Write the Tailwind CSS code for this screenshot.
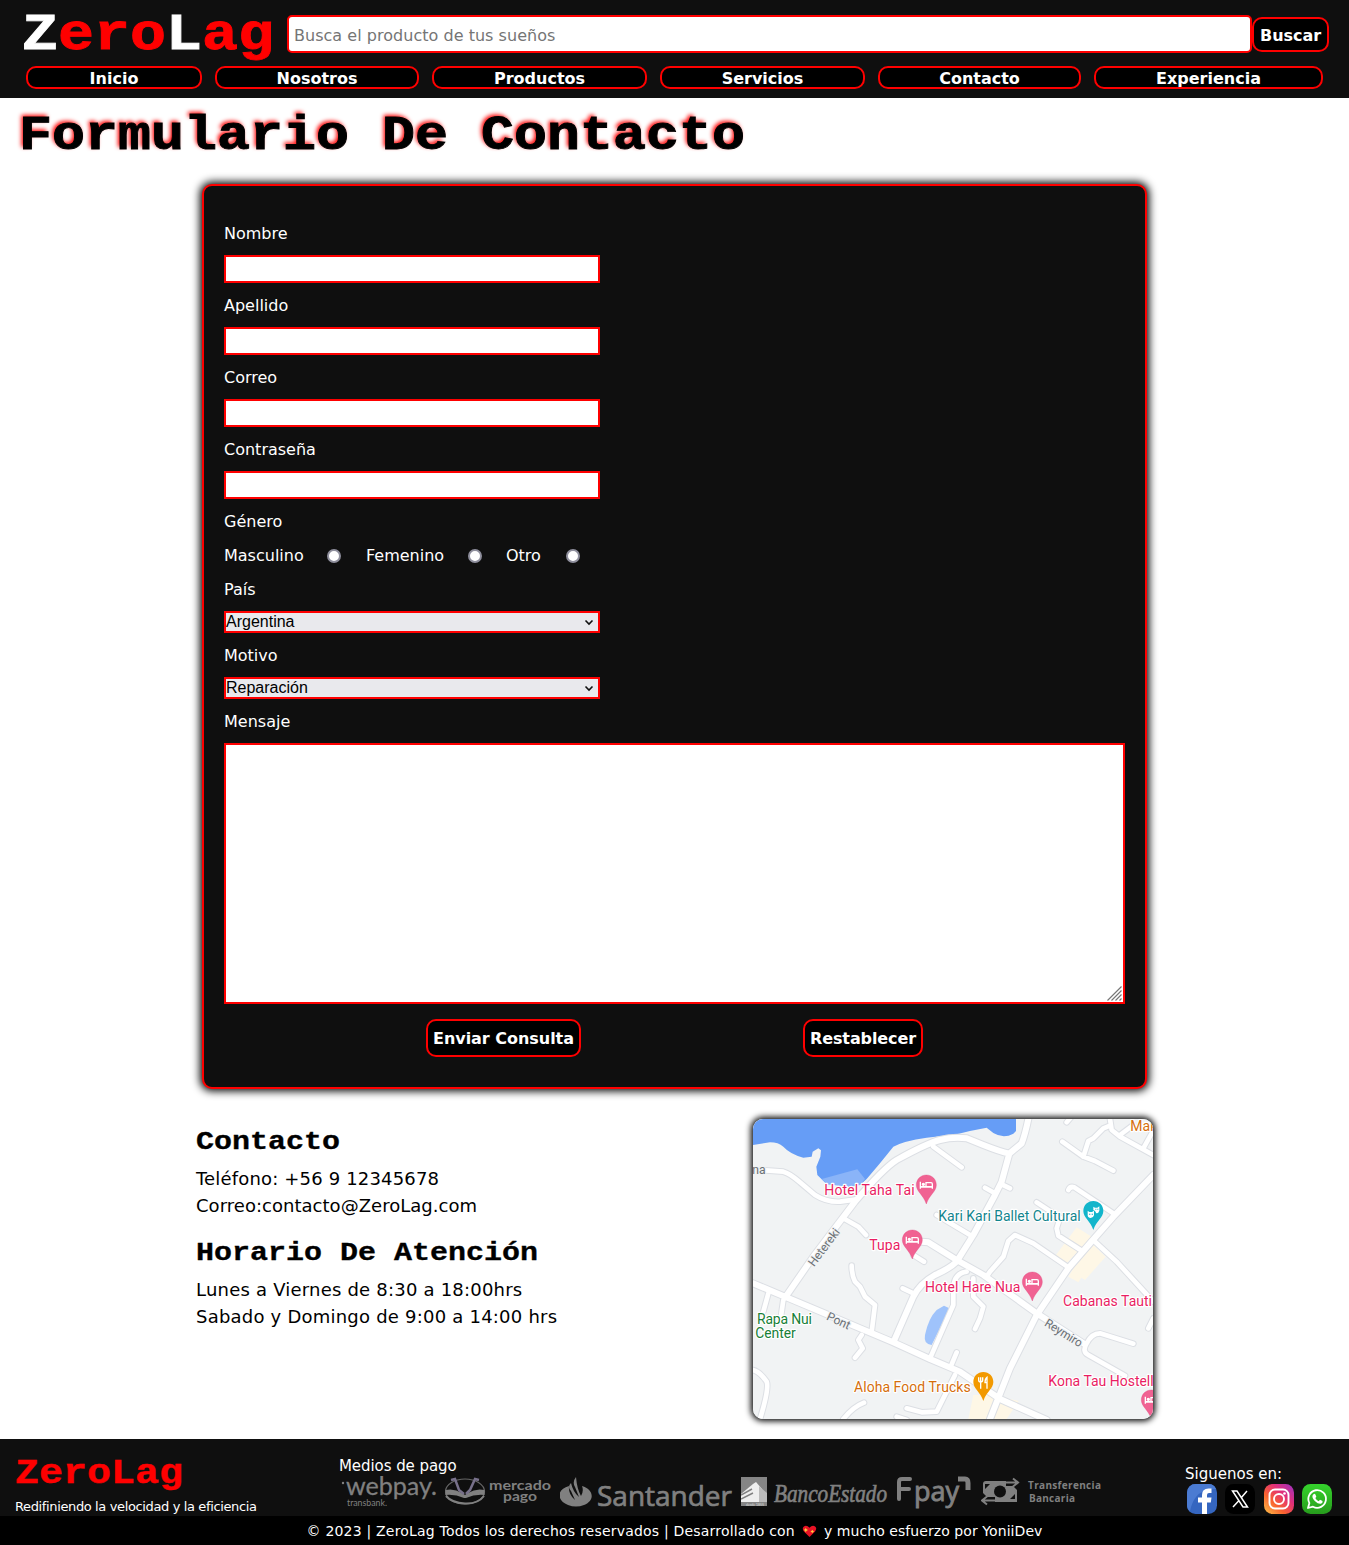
<!DOCTYPE html>
<html lang="es">
<head>
<meta charset="utf-8">
<title>ZeroLag - Contacto</title>
<script src="https://cdn.jsdelivr.net/npm/@tailwindcss/browser@4"></script>
</head>
<body class="bg-white text-black font-['Verdana','DejaVu_Sans',sans-serif] text-[16px] w-[1349px] h-[1545px] overflow-hidden flex flex-col">

<header class="bg-[#0f0f0f] h-[98px] shrink-0">
  <div class="flex h-[66px] pl-[22px] pr-5">
    <a class="w-[265px] shrink-0 font-['Courier_New','Liberation_Mono',monospace] font-bold text-[60px] leading-[66px] text-[#f00] origin-[0_49px] scale-y-[.87] [-webkit-text-stroke:1px]"><span class="text-white">Z</span>ero<span class="text-white">L</span>ag</a>
    <input type="text" placeholder="Busca el producto de tus sueños" class="mt-[15px] w-[965px] h-[38px] bg-white border-2 border-[#f00] rounded-[5px] px-[5px] pt-[2px] placeholder:text-[#757575] tracking-[0.03px]">
    <button class="mt-[17px] w-[77px] h-[35px] pt-[2px] bg-black border-2 border-[#f00] rounded-[10px] text-white font-bold tracking-[-0.05px]">Buscar</button>
  </div>
  <nav class="flex gap-[13px] pl-[26px] text-white font-bold leading-[21px] text-center">
    <a class="w-[176px] h-[23px] bg-black border-2 border-[#f00] rounded-[10px]">Inicio</a>
    <a class="w-[204px] h-[23px] bg-black border-2 border-[#f00] rounded-[10px]">Nosotros</a>
    <a class="w-[215px] h-[23px] bg-black border-2 border-[#f00] rounded-[10px]">Productos</a>
    <a class="w-[205px] h-[23px] bg-black border-2 border-[#f00] rounded-[10px]">Servicios</a>
    <a class="w-[203px] h-[23px] bg-black border-2 border-[#f00] rounded-[10px]">Contacto</a>
    <a class="w-[229px] h-[23px] bg-black border-2 border-[#f00] rounded-[10px]">Experiencia</a>
  </nav>
</header>

<main class="h-[1341px] shrink-0">
  <h1 class="h-[86px] pl-[19px] pt-[6px] font-['Courier_New','Liberation_Mono',monospace] font-bold text-[55px] leading-[62px] origin-[0_52px] scale-y-[.87] [-webkit-text-stroke:1px] [text-shadow:-2px_-2px_5px_#f00]">Formulario De Contacto</h1>

  <form class="ml-[202px] w-[945px] h-[905px] bg-[#0f0f0f] border-2 border-[#f00] rounded-[10px] shadow-[0_0_8px_2px_#000] px-5 pt-[25px] text-white flex flex-col">
    <label class="h-[44px] leading-[46px]">Nombre</label>
    <input class="w-[376px] h-[28px] bg-white border-2 border-[#f00]">
    <label class="h-[44px] leading-[46px]">Apellido</label>
    <input class="w-[376px] h-[28px] bg-white border-2 border-[#f00]">
    <label class="h-[44px] leading-[46px]">Correo</label>
    <input class="w-[376px] h-[28px] bg-white border-2 border-[#f00]">
    <label class="h-[44px] leading-[46px]">Contraseña</label>
    <input class="w-[376px] h-[28px] bg-white border-2 border-[#f00]">
    <label class="h-[44px] leading-[46px]">Género</label>
    <div class="h-[24px] leading-[26px] flex">
      <span class="w-[103px]">Masculino</span><i class="mt-[6px] w-[14px] h-[14px] rounded-full bg-white border-2 border-[#8f8f9d]"></i>
      <span class="ml-[25px] w-[102px]">Femenino</span><i class="mt-[6px] w-[14px] h-[14px] rounded-full bg-white border-2 border-[#8f8f9d]"></i>
      <span class="ml-[24px] w-[60px]">Otro</span><i class="mt-[6px] w-[14px] h-[14px] rounded-full bg-white border-2 border-[#8f8f9d]"></i>
    </div>
    <label class="h-[44px] leading-[46px]">País</label>
    <div class="w-[376px] h-[22px] bg-[#e9e9ed] border-2 border-[#f00] text-black font-['Arial','Liberation_Sans',sans-serif] leading-[17px] flex justify-between items-start"><span>Argentina</span><svg class="mt-[6px] mr-[4px]" width="10" height="7" viewBox="0 0 10 7"><path d="M1.5 1.5L5 5l3.5-3.500" fill="none" stroke="#111" stroke-width="1.6"/></svg></div>
    <label class="h-[44px] leading-[46px]">Motivo</label>
    <div class="w-[376px] h-[22px] bg-[#e9e9ed] border-2 border-[#f00] text-black font-['Arial','Liberation_Sans',sans-serif] leading-[17px] flex justify-between items-start"><span>Reparación</span><svg class="mt-[6px] mr-[4px]" width="10" height="7" viewBox="0 0 10 7"><path d="M1.5 1.5L5 5l3.5-3.500" fill="none" stroke="#111" stroke-width="1.6"/></svg></div>
    <label class="h-[44px] leading-[46px]">Mensaje</label>
    <div class="w-[901px] h-[261px] bg-white border-2 border-[#f00] flex justify-end items-end"><svg class="mb-px mr-px" width="15" height="15" viewBox="0 0 15 15"><path d="M.5 14.500L14.500.5M4.500 14.500l10-10M8.500 14.500l6-6M12.500 14.500l2-2" stroke="#777" stroke-width="1.200"/></svg></div>
    <div class="mt-[15px] pl-[202px] flex gap-[222px]">
      <button type="button" class="w-[155px] h-[38px] pt-[2px] bg-black border-2 border-[#f00] rounded-[10px] font-bold tracking-[-0.03px] whitespace-nowrap">Enviar Consulta</button>
      <button type="button" class="w-[120px] h-[38px] pt-[2px] bg-black border-2 border-[#f00] rounded-[10px] font-bold tracking-[-0.1px]">Restablecer</button>
    </div>
  </form>

  <section class="flex pl-[196px] pt-[30px]">
    <div class="w-[557px] text-[18px] leading-[27px]">
      <h2 class="pt-[5px] h-[46px] font-['Courier_New','Liberation_Mono',monospace] font-bold text-[30px] leading-[34px] origin-[0_30px] scale-y-[.87] [-webkit-text-stroke:.4px]">Contacto</h2>
      <p class="tracking-[0.17px]">Teléfono: +56 9 12345678</p>
      <p class="tracking-[0.03px]">Correo:contacto@ZeroLag.com</p>
      <h2 class="mt-[15px] h-[42px] pt-px font-['Courier_New','Liberation_Mono',monospace] font-bold text-[30px] leading-[34px] origin-[0_26px] scale-y-[.87] [-webkit-text-stroke:.4px]">Horario De Atención</h2>
      <p class="tracking-[0.21px]">Lunes a Viernes de 8:30 a 18:00hrs</p>
      <p class="tracking-[0.22px]">Sabado y Domingo de 9:00 a 14:00 hrs</p>
    </div>
    <div class="w-[400px] h-[300px] rounded-[10px] overflow-hidden shadow-[0_0_6px_2px_#000] bg-[#f1f3f4]">
      <svg width="400" height="300" viewBox="39 42 1200 900" font-family="Roboto, sans-serif" font-size="42">
        <defs>
          <path id="roads" d="M39 535L135 575L460 712L570 762L660 800L780 882L920 945M135 578L220 455L345 290Q430 190 470 165Q560 115 600 105Q640 95 680 100L730 120Q780 140 808 146M1240 210L1120 335L1050 415L985 490L890 630L810 790L750 942M545 410L565 412L650 465L730 510L890 625L1030 715M808 146L785 230L765 270L700 390L650 470Q630 490 585 510Q540 535 520 575L460 712M808 146L845 115Q855 90 865 42"/>
          <path id="lanes" d="M60 195L130 200Q150 205 180 232L225 270Q260 292 300 290L345 284M310 340L355 365L378 390M520 450L552 470M590 330L690 390M335 482Q335 510 345 530L360 545L375 575L405 600L395 680M365 690L355 705L368 730L345 758M488 550L520 565M85 565L70 620M130 585L122 640M39 795Q60 800 80 830Q88 850 60 942M310 942Q340 905 372 893M500 910L545 922L590 920L645 810M650 742L632 785M470 935L500 945M570 760L640 600L640 560Q638 505 680 500M700 520L700 575L730 605L720 640L705 672M665 187L580 125M735 248L765 265M785 238L810 250M967 110L1030 155L1065 168L1120 197M1030 155L1045 108L1060 100L1090 70L1110 62M1110 42L1115 75L1140 95L1240 150M1140 90L1180 60M1210 130L1235 85M980 52L992 38M985 255Q990 243 1003 247L1120 325M1065 410L1130 470L1240 590M890 292L960 338L950 370L955 392L1025 437M740 515L750 500L790 455L805 408L825 390L880 415L985 487M1180 716L1080 685Q1055 685 1040 715Q1025 740 1045 750L1155 812M1240 640L1225 670"/>
        </defs>
        <rect x="39" y="42" width="1200" height="900" fill="#f1f3f4"/>
        <path fill="#669df6" d="M39 42V120L90 112Q115 112 130 125Q150 147 190 158L215 155L218 140L235 130L243 136L241 155L229 185L232 210L260 238L360 240L380 222L420 175L460 125Q490 108 560 98L650 88L690 78L740 68L760 84Q790 102 820 86L828 78V42Z"/>
        <path fill="#8ab4f8" d="M245 222L352 193L375 222L360 240L330 246L262 238Z"/>
        <path fill="#9fc3fb" d="M612 602L628 610L600 670L575 720Q550 718 555 690Q565 640 590 615Z"/>
        <path fill="#fef7e6" d="M1010 367L1055 395L975 480L948 450ZM1050 410L1097 455L1035 525L1024 518L1015 532L985 515ZM700 870L765 870L740 942L685 942ZM780 876L836 888L800 942L755 942Z"/>
        <g fill="none" stroke-linejoin="round" stroke-linecap="round">
          <use href="#lanes" stroke="#dcdfe4" stroke-width="20"/>
          <use href="#roads" stroke="#dcdfe4" stroke-width="24"/>
          <use href="#lanes" stroke="#fff" stroke-width="14"/>
          <use href="#roads" stroke="#fff" stroke-width="18"/>
        </g>
        <g stroke="#fff" stroke-width="7" stroke-linejoin="round" paint-order="stroke">
          <g fill="#6b7075" stroke="#f1f3f4" font-size="36">
            <text x="37" y="206" textLength="40" lengthAdjust="spacingAndGlyphs">na</text>
            <text transform="translate(222 487) rotate(-53)" textLength="132" lengthAdjust="spacingAndGlyphs">Hetereki</text>
            <text transform="translate(257 643) rotate(25)" textLength="74" lengthAdjust="spacingAndGlyphs">Pont</text>
            <text transform="translate(911 661) rotate(32)" textLength="126" lengthAdjust="spacingAndGlyphs">Reymiro</text>
          </g>
          <g fill="#e91e63">
            <text x="253" y="270" textLength="271">Hotel Taha Tai</text>
            <text x="388" y="435" textLength="93">Tupa</text>
            <text x="555" y="561" textLength="286">Hotel Hare Nua</text>
            <text x="969" y="603" textLength="267">Cabanas Tauti</text>
            <text x="925" y="843" textLength="316">Kona Tau Hostell</text>
          </g>
          <text x="595" y="348" textLength="427" fill="#12858e">Kari Kari Ballet Cultural</text>
          <g fill="#188038">
            <text x="51" y="657" textLength="165">Rapa Nui</text>
            <text x="46" y="699" textLength="121">Center</text>
          </g>
          <g fill="#d56e0c">
            <text x="342" y="861" textLength="350">Aloha Food Trucks</text>
            <text x="1171" y="78">Mak</text>
          </g>
        </g>
        <defs>
          <path id="pin" d="M0-30C17-30 30-17 30 0C30 20 9 29 0 57C-9 29-30 20-30 0C-30-17-17-30 0-30Z"/>
          <g id="bed" fill="none" stroke="#fff" stroke-width="4"><path d="M-18-10V11M-18 6H18V11M18 6V-3Q18-7 14-7H-1V5M-18 5H18"/><circle cx="-9" cy="-2" r="3" fill="#fff"/></g>
        </defs>
        <g fill="#f06292" stroke="#e0407a" stroke-width="1">
          <use href="#pin" x="559" y="240"/><use href="#pin" x="517" y="405"/><use href="#pin" x="877" y="531"/><use href="#pin" x="1234" y="885"/>
        </g>
        <use href="#bed" x="559" y="240"/><use href="#bed" x="517" y="405"/><use href="#bed" x="877" y="531"/><use href="#bed" x="1234" y="885"/>
        <use href="#pin" x="1060" y="318" fill="#12b5cb"/>
        <path fill="#fff" d="M1043 317l5 4h8l6-4v14q-2 8-10 8t-9-8ZM1060 305l5 3h7l6-4v13q-2 8-9 8l-4-7-5-3Z"/>
        <path fill="#12b5cb" d="M1047 326h4v3h-4zM1055 326h4v3h-4zM1066 311h3v3h-3zM1072 311h3v3h-3z"/>
        <use href="#pin" x="730" y="831" fill="#f29900"/>
        <path fill="none" stroke="#fff" stroke-width="4" d="M716 817v8q0 6 6 6t6-6v-8M722 817v34M741 851v-34q-6 4-6 16h6"/>
      </svg>
    </div>
  </section>
</main>

<footer class="shrink-0 h-[106px] bg-[#0f0f0f] text-white">
  <div class="h-[77px] flex">
    <div class="w-[324px] pl-[15px] pt-[12px] shrink-0">
      <p class="font-['Courier_New','Liberation_Mono',monospace] font-bold text-[40px] leading-[44px] text-[#f00] origin-[0_33px] scale-y-[.87] [-webkit-text-stroke:.5px]">ZeroLag</p>
      <p class="mt-[3px] text-[13px] leading-[18px] tracking-[-0.37px] whitespace-nowrap">Redifiniendo la velocidad y la eficiencia</p>
    </div>
    <div class="pl-[15px] pt-[17px] w-[861px] shrink-0">
      <p class="text-[15px] leading-[20px] tracking-[-0.07px]">Medios de pago</p>
      <div class="flex gap-[7px] pl-[2px]">
        <svg width="97" height="35" viewBox="341 1476 97 35" fill="#808080" font-family="Lato, sans-serif"><circle cx="343" cy="1483" r="1.200"/><text x="346" y="1495" font-size="25" stroke="#808080" stroke-width=".3" textLength="91" lengthAdjust="spacingAndGlyphs">webpay.</text><text x="347" y="1505.500" font-size="8.500" textLength="40" lengthAdjust="spacingAndGlyphs">transbank.</text></svg>
        <svg width="108" height="35" viewBox="445 1476 108 35" fill="#808080" font-family="Lato, sans-serif" font-weight="700"><ellipse cx="465" cy="1491.500" rx="19.500" ry="12.500" fill="none" stroke="#666" stroke-width="1.200"/><path d="M445.500 1490Q454 1488 462 1493L465 1495L468 1493Q476 1488 484.500 1490V1495Q475 1494 466 1498H464Q455 1494 445.500 1495Z"/><path d="M451 1480L455 1479L459 1490L464 1494M479 1480L475 1479L470 1490L466 1494" fill="none" stroke="#77708a" stroke-width="2.500"/><path d="M446 1496Q452 1503 465 1503.500T484 1496" fill="none" stroke="#808080" stroke-width="2"/><text x="489" y="1490" font-size="14" textLength="62" lengthAdjust="spacingAndGlyphs">mercado</text><text x="503" y="1501" font-size="14" textLength="34" lengthAdjust="spacingAndGlyphs">pago</text></svg>
        <svg width="174" height="35" viewBox="560 1476 174 35" fill="#808080" font-family="'Open Sans', sans-serif"><path d="M569 1486C557 1489 556 1500 568 1505Q576 1508 584 1505C596 1500 593 1489 582 1486Q584 1491 581 1496Q577 1489 576 1477Q572 1482 575 1487L579 1497Q573 1492 571 1483Q567 1487 571 1491L575 1500Q568 1494 569 1486Z"/><text x="597" y="1505.500" font-size="27.500" stroke="#808080" stroke-width=".7" textLength="135" lengthAdjust="spacingAndGlyphs">Santander</text></svg>
        <svg width="148" height="35" viewBox="741 1476 148 35"><rect x="741" y="1477" width="26" height="29" fill="#858585"/><path d="M753 1484L756 1482L762 1489V1502H741V1494Z" fill="#eee"/><path d="M741 1495L752 1489M741 1499L753 1493" stroke="#808080" stroke-width="1.500"/><path d="M759 1486L767 1493V1502H759Z" fill="#bbb"/><text x="746" y="1505.500" font-family="Lato, sans-serif" font-size="3.500" fill="#ddd">desde 1855</text><text x="774" y="1501.500" font-family="'Liberation Serif', serif" font-style="italic" font-size="26" fill="#808080" stroke="#808080" stroke-width=".7" textLength="113" lengthAdjust="spacingAndGlyphs">BancoEstado</text></svg>
        <svg width="76" height="35" viewBox="895 1476 76 35" fill="none" stroke="#808080" stroke-width="4" stroke-linecap="round"><text x="913" y="1500.500" font-family="'Open Sans', sans-serif" font-size="27" fill="#808080" stroke-width=".9" textLength="45" lengthAdjust="spacingAndGlyphs">pay</text><path d="M898 1499V1482Q898 1479 901 1479H909M898 1489H908"/><path d="M957 1479H964Q967 1479 967 1483V1490" stroke-width="5" stroke-linecap="butt"/></svg>
        <svg class="ml-[2px]" width="121" height="35" viewBox="980 1476 121 35" fill="#808080" font-family="'Open Sans', sans-serif" font-weight="700" font-size="10"><path d="M985 1481H1005V1486H1012L1016 1490V1502H994V1497H986L982 1493V1484Q982 1481 985 1481Z"/><circle cx="999" cy="1491.500" r="6" fill="#0f0f0f"/><path d="M984 1484h5l-5 5ZM1014 1499h-5l5-5Z" fill="#0f0f0f"/><path d="M1001 1482.500H1016M1012 1478.500l5 4-5 4M996 1500.500H981.500M986 1496.500l-5 4 5 4" fill="none" stroke="#808080" stroke-width="2"/><text x="1027" y="1489" textLength="73">Transferencia</text><text x="1028" y="1502" textLength="46">Bancaria</text></svg>
      </div>
    </div>
    <div class="pt-[25px] -ml-px pl-px">
      <p class="text-[15px] leading-[20px]">Siguenos en:</p>
      <div class="flex gap-[8.400px] pl-[2px]">
        <svg width="30" height="30" viewBox="0 0 30 30"><rect width="30" height="30" rx="8.500" fill="#3566c0"/><path d="M0 15V8.500A8.500 8.500 0 0 1 8.500 0H21.500Q27 0 29 5Q15 5 9 13Q5 18 3 27Q0 25 0 21Z" fill="#4b7bd2"/><path fill="#fff" d="M15 30V18.500H11V13.500H15V11Q15 4.500 21.500 4.500H24.500V9H22Q20 9 20 11V13.500H24.500L23.800 18.500H20V30Z"/></svg>
        <svg width="30" height="30" viewBox="0 0 30 30"><rect width="30" height="30" rx="8.500" fill="#000"/><path d="M7.500 7h4.500L22.500 23H18ZM22 7L16 14M14 16.500L8 23" fill="none" stroke="#fff" stroke-width="1.500"/></svg>
        <svg width="30" height="30" viewBox="0 0 30 30"><defs><linearGradient id="ig" x1="0" y1="1" x2="1" y2="0"><stop offset="0" stop-color="#fdc54a"/><stop offset=".35" stop-color="#f9622f"/><stop offset=".65" stop-color="#e22f78"/><stop offset="1" stop-color="#9a32c8"/></linearGradient></defs><rect width="30" height="30" rx="8.500" fill="url(#ig)"/><g fill="none" stroke="#fff" stroke-width="1.900"><rect x="5.500" y="5.500" width="19" height="19" rx="5.500"/><circle cx="15" cy="15" r="5"/></g><circle cx="20.500" cy="9.500" r="1.300" fill="#fff"/></svg>
        <svg width="30" height="30" viewBox="0 0 30 30"><defs><linearGradient id="wa" x1="0" y1="0" x2="0" y2="1"><stop offset="0" stop-color="#35d32c"/><stop offset="1" stop-color="#279c1d"/></linearGradient></defs><rect width="30" height="30" rx="8.500" fill="url(#wa)"/><path d="M6 24l1.400-4.900A8.800 8.800 0 1 1 11 22.700Z" fill="none" stroke="#fff" stroke-width="1.800" stroke-linejoin="round"/><path fill="#fff" d="M11.500 10.200q1-.9 1.800 0l1 2.300q0 .6-1 1.500 1.200 2.200 3.400 3.200l1.300-1.500 2.600 1.200q.4 2.300-2 2.900-2.600.3-5.500-2.600-3.200-3.100-2.600-5.400.2-1 1-1.600Z"/></svg>
      </div>
    </div>
  </div>
  <div class="h-[29px] pt-[2px] bg-black text-[14px] flex justify-center items-center whitespace-nowrap">
    <span class="tracking-[0.2px]">© 2023 | ZeroLag Todos los derechos reservados | Desarrollado con</span>
    <svg class="mx-[7px]" width="15" height="13" viewBox="0 0 16 14"><path fill="#e81224" d="M8 13L2 7Q-.5 3.500 2 1.500Q5-.5 8 3Q11-.5 14 1.500Q16.500 3.500 14 7Z"/><path fill="#ffc83d" d="M4 3l.8 1.700 1.700.8-1.700.8L4 8l-.8-1.700-1.700-.8 1.700-.8ZM11 5l.7 1.300 1.300.7-1.300.7L11 9l-.7-1.300L9 7l1.300-.7Z"/></svg>
    <span class="tracking-[0.07px]">y mucho esfuerzo por YoniiDev</span>
  </div>
</footer>
</body>
</html>
